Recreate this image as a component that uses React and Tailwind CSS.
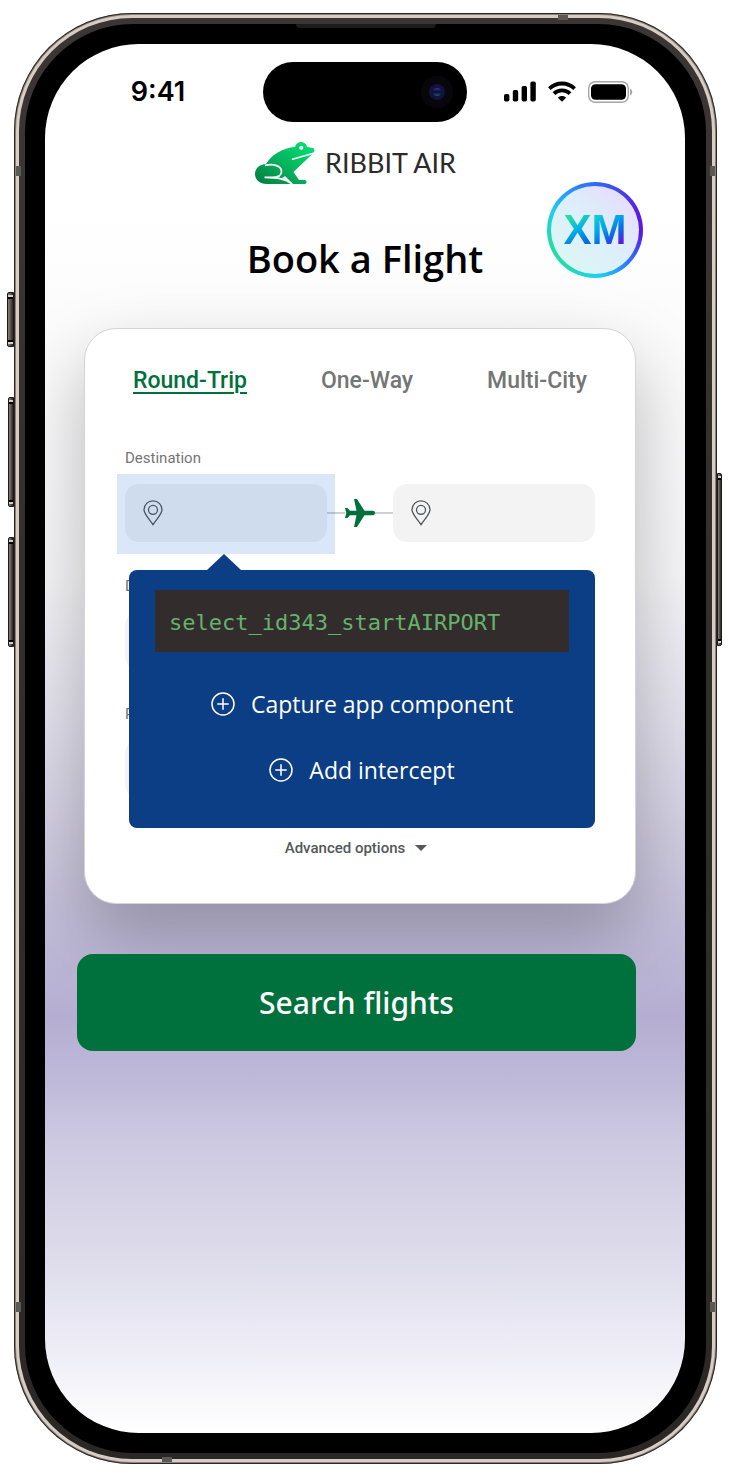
import React from "react";

const leftButtons = [
  "top-[279px] h-[55px] w-[7px]",
  "top-[384px] h-[110px] w-[6px]",
  "top-[524px] h-[110px] w-[6px]",
];

const antennaBands = [
  "top-[2px] right-[149px] h-[5px] w-[10px]",
  "bottom-[2px] left-[148px] h-[5px] w-[10px]",
  "top-[153px] left-[2px] h-[10px] w-[5px]",
  "top-[153px] right-[2px] h-[10px] w-[5px]",
  "bottom-[152px] left-[2px] h-[10px] w-[5px]",
  "bottom-[152px] right-[2px] h-[10px] w-[5px]",
];

function SideButton({ className }) {
  return (
    <div
      className={`absolute flex flex-col justify-between border border-[#1c1917] bg-linear-to-r from-[#8b817a] via-[#5b5551] to-[#2b2725] py-[2px] ${className}`}
    >
      <span className="block h-[4px] border-b-2 border-black bg-[#d9cfc7]" />
      <span className="block h-[4px] border-t-2 border-black bg-[#d9cfc7]" />
    </div>
  );
}

function SignalIcon() {
  return (
    <svg className="h-[22px] w-8" viewBox="0 0 32 22" aria-hidden="true">
      <rect x="0" y="13" width="5.4" height="7.5" rx="1.7" />
      <rect x="8.8" y="9" width="5.4" height="11.5" rx="1.7" />
      <rect x="17.6" y="5" width="5.4" height="15.5" rx="1.7" />
      <rect x="26.4" y="0.5" width="5.4" height="20" rx="1.7" />
    </svg>
  );
}

function WifiIcon() {
  return (
    <svg className="h-[22px] w-7" viewBox="0 0 28 22" fill="none" stroke="#000" strokeWidth="3.8" aria-hidden="true">
      <path d="M1.400 7.600C8.400 0.800 19.600 0.800 26.600 7.600" />
      <path d="M6 12.600C10.400 8.300 17.600 8.300 22 12.600" />
      <path d="M14 20.800L9.900 16.700C12.200 14.300 15.800 14.300 18.100 16.700Z" fill="#000" stroke="none" />
    </svg>
  );
}

function BatteryIcon() {
  return (
    <svg className="h-[22px] w-[45px]" viewBox="0 0 45 22" aria-hidden="true">
      <rect x="0.700" y="0.700" width="39.600" height="20.600" rx="6.500" fill="none" stroke="#a6a6a6" strokeWidth="1.400" />
      <rect x="3" y="3.300" width="35" height="15.400" rx="4.500" />
      <path d="M42 7.500C44.900 8.500 44.900 13.500 42 14.500Z" fill="#a6a6a6" />
    </svg>
  );
}

function FrogLogo() {
  return (
    <svg className="h-[42px] w-[60px]" viewBox="0 0 60 42" aria-hidden="true">
      <defs>
        <linearGradient id="frog" x1="0" y1="1" x2="1" y2="0">
          <stop offset="0" stopColor="#00793f" />
          <stop offset="0.450" stopColor="#06b05b" />
          <stop offset="1" stopColor="#00e676" />
        </linearGradient>
      </defs>
      <path
        fill="url(#frog)"
        d="M11 22C17 12 28 6 40 5C41 1.800 43.200 0 46.200 0C49.400 0 51.500 2.200 52 5L58 6C59.600 6.300 59.600 9 58.700 10.800L38.500 30L44 38H50C52 38 52 42 50 42H38L30 34C29 35 28 35.600 26 36.300C30 36.800 34 38.500 36 42H12C4.500 42 0 37.500 0 32C0 26.500 4.500 22.300 11 22Z"
      />
      <circle cx="46.300" cy="5.800" r="2" fill="#fff" />
      <path d="M37.500 17.200L58.500 11.200" stroke="#fff" strokeWidth="1.700" strokeLinecap="round" />
      <path
        d="M10 23.300C19 21.300 26.500 24 26.500 29.500C26.500 33.500 22.500 35.400 17 35.400H9.500C20 35.800 30 36 37 42"
        fill="none"
        stroke="#fff"
        strokeWidth="1.700"
      />
    </svg>
  );
}

function PinIcon() {
  return (
    <svg className="h-[26px] w-5" viewBox="0 0 20 26" fill="none" stroke="#515456" strokeWidth="1.300" aria-hidden="true">
      <path d="M10 24.700C6.500 19.200 1 14 1 9.700A9 8.900 0 0 1 19 9.700C19 14 13.500 19.200 10 24.700Z" />
      <circle cx="10" cy="9.800" r="4.500" />
    </svg>
  );
}

function PlaneIcon() {
  return (
    <svg className="h-7 w-[30px]" viewBox="0 0 30 28" fill="#00703c" aria-hidden="true">
      <path d="M9 0H12L19.500 11.800H28C30.700 11.800 30.700 16.200 28 16.200H19.500L12 28H9L11.500 16.200H5L2.500 19H0L1.300 14L0 9H2.500L5 11.800H11.500Z" />
    </svg>
  );
}

function PlusCircle() {
  return (
    <svg className="h-6 w-6" viewBox="0 0 24 24" fill="none" stroke="#fff" strokeWidth="1.500" aria-hidden="true">
      <circle cx="12" cy="12" r="11" />
      <path d="M12 6.800V17.200M6.800 12H17.200" strokeLinecap="round" />
    </svg>
  );
}

function StatusBar() {
  return (
    <div className="grid grid-cols-[1fr_204px_1fr] items-center">
      <div className="pl-2 text-center font-['Inter'] text-[27px] leading-8 font-semibold">9:41</div>
      <div className="flex h-[60px] items-center justify-end rounded-full bg-black pr-[14px]">
        <div className="flex h-8 w-8 items-center justify-center rounded-full bg-[#08060b]">
          <div className="flex h-4 w-4 items-center justify-center rounded-full bg-[#12123f]">
            <div className="h-2 w-2 rounded-full bg-linear-to-b from-[#3838a0] via-[#0b0b30] to-[#175a78]" />
          </div>
        </div>
      </div>
      <div className="flex items-center justify-center gap-3 pr-4">
        <SignalIcon />
        <WifiIcon />
        <BatteryIcon />
      </div>
    </div>
  );
}

function Tab({ active, children }) {
  return (
    <button
      type="button"
      role="tab"
      aria-selected={Boolean(active)}
      className={
        active
          ? "text-[23px] leading-8 font-medium text-[#00703c] underline decoration-2 underline-offset-4"
          : "text-[23px] leading-8 font-medium text-[#757575]"
      }
    >
      {children}
    </button>
  );
}

function Field({ id, label }) {
  return (
    <div className="flex flex-col gap-[14px]">
      <label htmlFor={id} className="text-[15px] leading-6 text-[#757575]">
        {label}
      </label>
      <input id={id} type="text" className="h-[58px] w-full rounded-[14px] bg-[#f3f3f3] px-4" />
    </div>
  );
}

function AirportInput({ id, label }) {
  return (
    <div className="flex h-[58px] min-w-0 flex-1 items-center gap-3 rounded-[14px] bg-[#f3f3f3] px-[18px]">
      <PinIcon />
      <input id={id} type="text" aria-label={label} className="h-full min-w-0 flex-1 bg-transparent outline-none" />
    </div>
  );
}

function InspectorPopup() {
  return (
    <div className="absolute top-full right-0 left-1 mt-7 rounded-lg bg-[#0b3e85] px-[26px] pt-5 pb-10 text-white">
      <div className="absolute bottom-full left-[78px] h-4 w-[34px] bg-[#0b3e85] [clip-path:polygon(50%_0,100%_100%,0_100%)]" />
      <div className="bg-[#322d2c] px-[14px] pt-[18px] pb-[14px] font-['DejaVu_Sans_Mono'] text-[22px] leading-[30px] text-[#66b26c]">
        select_id343_startAIRPORT
      </div>
      <div className="mt-[34px] flex flex-col items-center gap-[30px]">
        <button type="button" className="flex items-center gap-4 font-['Open_Sans'] text-[23px] leading-9">
          <PlusCircle />
          Capture app component
        </button>
        <button type="button" className="flex items-center gap-4 font-['Open_Sans'] text-[23px] leading-9">
          <PlusCircle />
          Add intercept
        </button>
      </div>
    </div>
  );
}

function BookingCard() {
  return (
    <section className="mr-[49px] ml-[39px] rounded-[32px] border border-[#d4d4d4] bg-white px-10 pt-9 pb-[43px] font-['Roboto'] shadow-[0_32px_72px_rgba(0,0,0,0.26)]">
      <div role="tablist" className="flex justify-between px-2">
        <Tab active>Round-Trip</Tab>
        <Tab>One-Way</Tab>
        <Tab>Multi-City</Tab>
      </div>
      <form className="mt-[49px] flex flex-col gap-8">
        <div className="flex flex-col gap-[14px]">
          <label htmlFor="origin" className="text-[15px] leading-6 text-[#757575]">
            Destination
          </label>
          <div className="relative flex items-center">
            <AirportInput id="origin" label="Departure airport" />
            <div className="flex w-[66px] items-center">
              <span className="h-[2px] flex-1 bg-[#d0d0d0]" />
              <PlaneIcon />
              <span className="h-[2px] flex-1 bg-[#d0d0d0]" />
            </div>
            <AirportInput id="arrival" label="Arrival airport" />
            <div className="pointer-events-none absolute -top-[10px] -bottom-3 -left-2 w-[218px] bg-[#085fd0]/15" />
            <InspectorPopup />
          </div>
        </div>
        <Field id="dates" label="Dates" />
        <Field id="passengers" label="Passengers" />
      </form>
      <button
        type="button"
        className="mx-auto mt-[38px] flex items-center gap-[10px] pr-2 text-[15px] leading-6 font-medium text-[#54585a]"
      >
        Advanced options
        <svg className="h-[6px] w-3" viewBox="0 0 12 6" fill="#54585a" aria-hidden="true">
          <path d="M0 0H12L6 6Z" />
        </svg>
      </button>
    </section>
  );
}

function XmBadge() {
  return (
    <div className="absolute top-[138px] right-[42px] rounded-full bg-[conic-gradient(from_0deg,#2f6bf5,#5a1ae0_70deg,#5a1ae0_95deg,#2a85ff_140deg,#1cd0f0_175deg,#22dca8_220deg,#22dca8_255deg,#20ccf0_295deg,#2a85ff_335deg,#2f6bf5)] p-1">
      <div className="flex h-[88px] w-[88px] items-center justify-center rounded-full bg-linear-to-tr from-[#dcf8f2] via-[#dceffb] to-[#e9d8fb] font-['Liberation_Sans'] text-[42px] leading-none font-bold text-transparent">
        <span className="bg-[linear-gradient(155deg,#22dca8_22%,#00b4e8_48%,#0b6ae0_78%)] bg-clip-text">X</span>
        <span className="bg-[linear-gradient(145deg,#12c8d8_18%,#00a0f0_42%,#0b6ae0_60%,#5a1ae0_82%)] bg-clip-text">M</span>
      </div>
    </div>
  );
}

export default function App() {
  return (
    <div className="min-h-screen bg-white pt-[13px] pr-[13px] pb-[14px] pl-[14px]">
      <div className="relative rounded-[118px] bg-[#8b817a] p-[2px] shadow-[inset_0_0_0_1px_#2b2725]">
        {leftButtons.map((place) => (
          <SideButton key={place} className={`right-full rounded-l-[2px] ${place}`} />
        ))}
        <SideButton className="top-[460px] left-full h-[173px] w-[5px] rounded-r-[2px]" />
        <div className="rounded-[116px] bg-[#d8cdc5] p-[3px]">
          <div className="rounded-[113px] bg-linear-to-b from-[#3b3634] to-[#2a2725] p-[6px]">
            <div className="relative rounded-[108px] bg-black p-5 pr-[21px]">
              <div className="absolute top-0 left-1/2 h-1 w-[140px] -translate-x-1/2 rounded-b-[4px] bg-[#1c1c1c]" />
              <main className="relative rounded-[94px] bg-[linear-gradient(to_bottom,#fff_12%,#fafafb_24%,#f6f6f8_38%,#e2e0ec_49%,#cfcbe0_58%,#c0bbd8_64%,#b5aed2_70%,#bdb7d8_74%,#cdc9e1_79%,#dddbea_87%,#ebeaf5_93%,#fff_100%)] pt-[18px] pb-[382px] text-black">
                <StatusBar />
                <header className="mt-5 mr-[19px] flex items-center justify-center gap-[10px]">
                  <FrogLogo />
                  <span className="font-['Lato'] text-[27px] leading-[42px] text-[#2b2b2b]">RIBBIT AIR</span>
                </header>
                <h1 className="mt-[50px] text-center font-['Open_Sans'] text-[38px] leading-[48px] font-semibold">
                  Book a Flight
                </h1>
                <XmBadge />
                <div className="mt-[46px]">
                  <BookingCard />
                </div>
                <div className="mt-[50px] mr-[49px] ml-8">
                  <button
                    type="button"
                    className="w-full rounded-2xl bg-[#00703c] py-6 font-['Noto_Sans'] text-[30px] leading-[49px] font-medium text-white"
                  >
                    Search flights
                  </button>
                </div>
              </main>
            </div>
          </div>
        </div>
        {antennaBands.map((place) => (
          <span key={place} className={`absolute bg-[#5c5855] ${place}`} />
        ))}
      </div>
    </div>
  );
}
